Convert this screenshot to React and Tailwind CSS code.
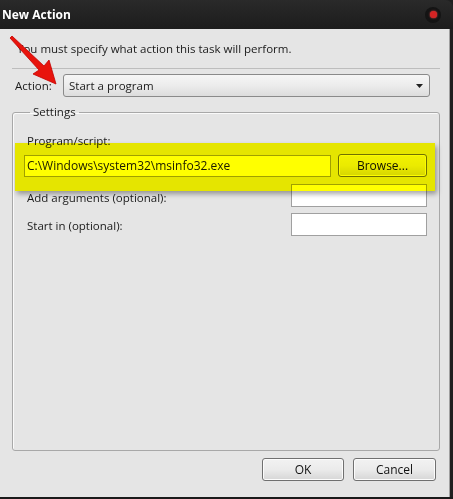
const font = { fontFamily: '"Segoe UI", "Open Sans", "Liberation Sans", sans-serif' };

function Button({ children, className = '' }) {
  return (
    <div
      className={`flex items-center justify-center rounded-[3px] border border-[#707070] bg-gradient-to-b from-[#f2f2f2] via-[#ebebeb] to-[#d6d6d6] text-[12px] text-[#111] shadow-[inset_0_0_0_1px_#fcfcfc] ${className}`}
    >
      {children}
    </div>
  );
}

export default function App() {
  return (
    <div className="relative flex h-[499px] w-[453px] flex-col overflow-hidden bg-[#202020]" style={font}>
      {/* title bar */}
      <div className="flex h-[29px] shrink-0 items-center justify-between rounded-tr-[8px] bg-gradient-to-b from-[#2a2a2a] to-[#1c1c1c] pl-[2px] pr-[12px]">
        <span className="text-[12px] font-bold text-white">New Action</span>
        <div className="flex h-[16px] w-[16px] items-center justify-center rounded-full bg-[#141414]">
          <div className="h-[7px] w-[7px] rounded-full bg-[#d42424] shadow-[0_0_2px_#ff5050]" />
        </div>
      </div>

      {/* body */}
      <div className="mb-[2px] mr-[3px] flex flex-1 flex-col border-r border-[#a0a0a0] bg-[#e5e5e5] text-[11.5px] text-[#1a1a1a]">
        <div className="pl-[17px] pt-[12px] leading-[16px]">You must specify what action this task will perform.</div>
        <div className="ml-[12px] mr-[9px] mt-[11px] h-[2px] border-t border-[#bdbdbd] border-b-white" />

        <div className="mt-[4px] flex h-[23px] items-center pl-[15px]">
          <span className="w-[48px]">Action:</span>
          <div className="flex h-[23px] w-[367px] items-center justify-between rounded-[3px] border border-[#8a8a8a] bg-gradient-to-b from-[#f6f6f6] via-[#ececec] to-[#dcdcdc] pl-[5px] pr-[6px]">
            <span>Start a program</span>
            <svg width="7" height="4" viewBox="0 0 7 4">
              <path d="M0 0h7L3.5 4z" fill="#222" />
            </svg>
          </div>
        </div>

        <fieldset className="ml-[12px] mr-[9px] mt-[8px] h-[346px] rounded-[3px] border border-[#a8a8a8] pl-[14px] pr-[12px] pt-[14px] shadow-[inset_1px_1px_0_#fafafa]">
          <legend className="ml-[3px] px-[3px] leading-[14px]">Settings</legend>
          <div className="leading-[16px]">Program/script:</div>
          <div className="mt-[5px] flex items-center justify-between">
            <div className="-ml-[3px] flex h-[22px] w-[307px] items-center border border-[#a0a0a0] bg-white px-[2px] text-[12px]">
              C:\Windows\system32\msinfo32.exe
            </div>
            <Button className="h-[23px] w-[89px]">Browse...</Button>
          </div>
          <div className="mt-[7px] flex items-center justify-between">
            <span className="pt-[4px]">Add arguments (optional):</span>
            <div className="h-[23px] w-[136px] border border-[#a0a0a0] bg-white" />
          </div>
          <div className="mt-[6px] flex items-center justify-between">
            <span className="pt-[2px]">Start in (optional):</span>
            <div className="h-[23px] w-[136px] border border-[#a0a0a0] bg-white" />
          </div>
        </fieldset>

        <div className="mt-[7px] flex justify-end gap-[9px] pr-[13px]">
          <Button className="h-[23px] w-[82px]">OK</Button>
          <Button className="h-[23px] w-[83px]">Cancel</Button>
        </div>
      </div>
      <div className="absolute bottom-0 left-0 h-[2px] w-full bg-[#1a1a1a]" />

      {/* yellow highlighter overlay */}
      <div className="pointer-events-none absolute left-[15px] top-[143px] h-[48px] w-[420px] bg-[#ffff00] mix-blend-multiply shadow-[2px_3px_5px_rgba(0,0,0,0.35)]" />

      {/* red annotation arrow */}
      <svg className="pointer-events-none absolute left-0 top-0" width="80" height="100" viewBox="0 0 80 100">
        <path d="M10 38 L12 36 L44 66 L49 60 L56 84 L33 74 L39 70 Z" fill="#e8140c" stroke="#c40000" strokeWidth="0.8" strokeLinejoin="round" />
      </svg>
    </div>
  );
}
